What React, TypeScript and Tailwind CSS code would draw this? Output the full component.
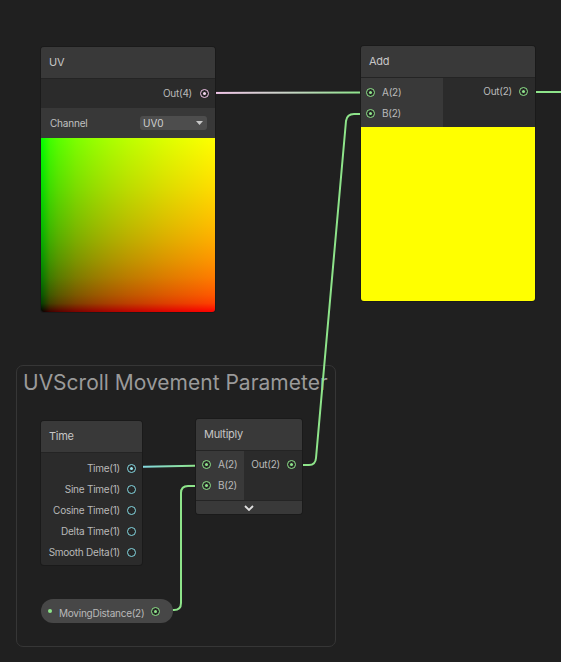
import React from "react";

type PortColor = "green" | "pink" | "cyan";

const PORT: Record<PortColor, { ring: string; dot: string }> = {
  green: { ring: "border-[#8ee48a]", dot: "bg-[#8ee48a]" },
  pink: { ring: "border-[#f0c4e8]", dot: "bg-[#f6d8f1]" },
  cyan: { ring: "border-[#84d8e2]", dot: "bg-[#9be6ee]" },
};

function Port({ color, connected }: { color: PortColor; connected?: boolean }) {
  const c = PORT[color];
  return (
    <span
      className={`flex h-[9px] w-[9px] shrink-0 items-center justify-center rounded-full border-[1.5px] bg-[#262626] ${c.ring}`}
    >
      {connected && <span className={`h-[3px] w-[3px] rounded-full ${c.dot}`} />}
    </span>
  );
}

function Label({ children }: { children: React.ReactNode }) {
  return <span className="whitespace-nowrap text-[10px] tracking-[-0.25px] text-[#b9b9b9]">{children}</span>;
}

function OutRow({ label, color, connected }: { label: string; color: PortColor; connected?: boolean }) {
  return (
    <div className="flex h-[21px] items-center justify-end gap-[7px] pr-[6px]">
      <Label>{label}</Label>
      <Port color={color} connected={connected} />
    </div>
  );
}

function InRow({ label, color, connected }: { label: string; color: PortColor; connected?: boolean }) {
  return (
    <div className="flex h-[21px] items-center gap-[7px] pl-[5px]">
      <Port color={color} connected={connected} />
      <Label>{label}</Label>
    </div>
  );
}

function Header({ title }: { title: string }) {
  return (
    <div className="flex h-[32px] items-center border-b border-[#242424] bg-[#393939] px-[8px] text-[11px] tracking-[-0.3px] text-[#c6c6c6]">
      {title}
    </div>
  );
}

function Edges() {
  return (
    <svg className="absolute inset-0" width={561} height={662} fill="none">
      <defs>
        <linearGradient id="uvToAdd" gradientUnits="userSpaceOnUse" x1={215} y1={0} x2={361} y2={0}>
          <stop offset="0" stopColor="#f0c4e8" />
          <stop offset="0.5" stopColor="#c8d4c6" />
          <stop offset="1" stopColor="#8ee48a" />
        </linearGradient>
        <linearGradient id="timeToMul" gradientUnits="userSpaceOnUse" x1={142} y1={0} x2={196} y2={0}>
          <stop offset="0" stopColor="#84d8e2" />
          <stop offset="1" stopColor="#8ee48a" />
        </linearGradient>
      </defs>
      <path d="M205 93 L371 92.5" stroke="url(#uvToAdd)" strokeWidth={2} />
      <path d="M524 92 L561 92" stroke="#8ee48a" strokeWidth={2} />
      <path
        d="M292 465 L309 465 Q315.5 465 316 458 L346 121 Q347 114 354 114 L371 114"
        stroke="#8ee48a"
        strokeWidth={2}
      />
      <path d="M132 467 L206 465.5" stroke="url(#timeToMul)" strokeWidth={2} />
      <path
        d="M156 610 L174 610 Q181 610 181 603 L181 493 Q181 486 188 486 L206 486"
        stroke="#8ee48a"
        strokeWidth={2}
      />
    </svg>
  );
}

export default function App() {
  return (
    <div className="relative h-[662px] w-[561px] overflow-hidden bg-[#202020] font-['Inter',sans-serif]">
      {/* group frame */}
      <div className="absolute left-[16px] top-[365px] h-[282px] w-[320px] rounded-[7px] border border-[#363636] px-[6px] pt-[2px]">
        <div className="whitespace-nowrap text-[21px] leading-[30px] text-[#9a9a9a]">UVScroll Movement Parameter</div>
      </div>

      <Edges />

      {/* UV node */}
      <div className="absolute left-[41px] top-[47px] w-[174px] overflow-hidden rounded-[3px] bg-[#2b2b2b] shadow-[0_0_0_1px_#1a1a1a]">
        <Header title="UV" />
        <div className="flex h-[29px] items-center justify-end gap-[8px] pr-[6px]">
          <Label>Out(4)</Label>
          <Port color="pink" connected />
        </div>
        <div className="flex h-[30px] items-center justify-between bg-[#383838] pl-[9px] pr-[8px]">
          <span className="text-[10px] tracking-[-0.2px] text-[#c0c0c0]">Channel</span>
          <div className="flex h-[14px] w-[67px] items-center justify-between rounded-[3px] bg-[#4d4d4d] pl-[3px] pr-[4px]">
            <span className="text-[10px] leading-none text-[#d0d0d0]">UV0</span>
            <svg width="7" height="4" viewBox="0 0 7 4">
              <path d="M0 0 L7 0 L3.5 4 Z" fill="#c8c8c8" />
            </svg>
          </div>
        </div>
        <div className="h-[174px] bg-[linear-gradient(to_top,#000_0%,#003f00_5%,#005900_10%,#007c00_20%,#009500_30%,#00aa00_40%,#00bc00_50%,#00cb00_60%,#00da00_70%,#00e700_80%,#00f300_90%,#00ff00_100%),linear-gradient(to_right,#000_0%,#3f0000_5%,#590000_10%,#7c0000_20%,#950000_30%,#aa0000_40%,#bc0000_50%,#cb0000_60%,#da0000_70%,#e70000_80%,#f30000_90%,#ff0000_100%)] bg-blend-screen" />
      </div>

      {/* Add node */}
      <div className="absolute left-[361px] top-[46px] w-[174px] overflow-hidden rounded-[3px] bg-[#2b2b2b] shadow-[0_0_0_1px_#1a1a1a]">
        <Header title="Add" />
        <div className="flex h-[49px]">
          <div className="w-[82px] bg-[#393939] pt-[4px]">
            <InRow label="A(2)" color="green" connected />
            <InRow label="B(2)" color="green" connected />
          </div>
          <div className="flex-1 pt-[3px]">
            <div className="flex h-[21px] items-center justify-end gap-[7px] pr-[7px]">
              <Label>Out(2)</Label>
              <Port color="green" connected />
            </div>
          </div>
        </div>
        <div className="h-[174px] bg-[#ffff00]" />
      </div>

      {/* Time node */}
      <div className="absolute left-[41px] top-[421px] w-[101px] overflow-hidden rounded-[3px] bg-[#2b2b2b] pb-[2px] shadow-[0_0_0_1px_#1a1a1a]">
        <Header title="Time" />
        <div className="pt-[5px]">
          <OutRow label="Time(1)" color="cyan" connected />
          <OutRow label="Sine Time(1)" color="cyan" />
          <OutRow label="Cosine Time(1)" color="cyan" />
          <OutRow label="Delta Time(1)" color="cyan" />
          <OutRow label="Smooth Delta(1)" color="cyan" />
        </div>
      </div>

      {/* Multiply node */}
      <div className="absolute left-[196px] top-[419px] w-[106px] overflow-hidden rounded-[3px] bg-[#2b2b2b] shadow-[0_0_0_1px_#1a1a1a]">
        <Header title="Multiply" />
        <div className="flex h-[49px]">
          <div className="w-[48px] bg-[#393939] pt-[3px]">
            <div className="pl-[1px]">
              <InRow label="A(2)" color="green" connected />
              <InRow label="B(2)" color="green" connected />
            </div>
          </div>
          <div className="flex-1 pt-[3px]">
            <OutRow label="Out(2)" color="green" connected />
          </div>
        </div>
        <div className="flex h-[14px] items-center justify-center border-t border-[#242424] bg-[#393939]">
          <svg width="10" height="6" viewBox="0 0 10 6">
            <path d="M1 1 L5 5 L9 1" stroke="#e0e0e0" strokeWidth={1.8} fill="none" />
          </svg>
        </div>
      </div>

      {/* MovingDistance property */}
      <div className="absolute left-[41px] top-[599px] flex h-[24px] w-[132px] items-center rounded-full bg-[#474747] pl-[7px] pr-[13px]">
        <span className="h-[4px] w-[4px] shrink-0 rounded-full bg-[#8ee48a]" />
        <span className="ml-[7px] flex-1">
          <Label>MovingDistance(2)</Label>
        </span>
        <Port color="green" connected />
      </div>
    </div>
  );
}
